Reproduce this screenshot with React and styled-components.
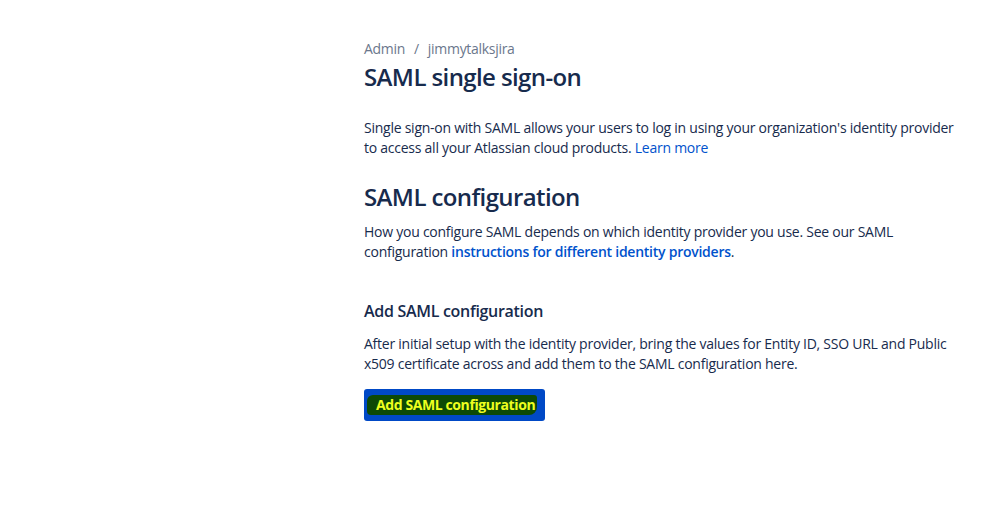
import React from "react";
import styled, { createGlobalStyle } from "styled-components";

const GlobalStyle = createGlobalStyle`
  html, body {
    margin: 0;
    padding: 0;
    background: #ffffff;
  }
  body {
    font-family: "Open Sans", "Noto Sans", "Liberation Sans", sans-serif;
    color: #172b4d;
    -webkit-font-smoothing: antialiased;
  }
`;

const Page = styled.div`
  padding: 39px 0 0 364px;
`;

const Content = styled.div`
  width: 594px;
  font-size: 14px;
  line-height: 20px;
  letter-spacing: -0.25px;
`;

const Breadcrumbs = styled.nav`
  display: flex;
  gap: 9px;
  color: #6b778c;
  height: 20px;
  letter-spacing: -0.3px;
`;

const Title = styled.h1`
  margin: ${({ top }) => top || 4}px 0 0;
  font-size: 24px;
  line-height: 28px;
  font-weight: 600;
  letter-spacing: -0.6px;
  color: #172b4d;
`;

const SubTitle = styled.h3`
  margin: 39px 0 0;
  font-size: 16px;
  line-height: 20px;
  font-weight: 600;
  letter-spacing: -0.3px;
  color: #172b4d;
`;

const Describe = styled.p`
  margin: ${({ top }) => top}px 0 0;
  color: #172b4d;
`;

const Link = styled.a`
  color: #0052cc;
  text-decoration: none;
  font-weight: ${({ bold }) => (bold ? 600 : 400)};
`;

const Button = styled.button`
  margin-top: 15px;
  height: 32px;
  padding: 0 8px 0 3px;
  border: none;
  border-radius: 3px;
  background: #0049c6;
  font-family: inherit;
  font-size: 14px;
  font-weight: 700;
  letter-spacing: -0.4px;
  cursor: pointer;
  display: flex;
  align-items: center;
`;

const Marker = styled.span`
  display: inline-block;
  padding: 0 2px 0 9px;
  line-height: 20px;
  background: #0d4a06;
  border-radius: 6px 3px 8px 4px;
  color: #eeff1f;
`;

const App = () => {
  return (
    <Page>
      <GlobalStyle />
      <Content>
        <Breadcrumbs>
          <span>Admin</span>
          <span>/</span>
          <span>jimmytalksjira</span>
        </Breadcrumbs>
        <Title>SAML single sign-on</Title>
        <Describe top={27}>
          Single sign-on with SAML allows your users to log in using your
          organization's identity provider to access all your Atlassian cloud
          products. <Link href="#">Learn more</Link>
        </Describe>
        <Title top={25}>SAML configuration</Title>
        <Describe top={11}>
          How you configure SAML depends on which identity provider you use.
          See our SAML configuration{" "}
          <Link href="#" bold>
            instructions for different identity providers
          </Link>
          .
        </Describe>
        <SubTitle>Add SAML configuration</SubTitle>
        <Describe top={13}>
          After initial setup with the identity provider, bring the values for
          Entity ID, SSO URL and Public x509 certificate across and add them to
          the SAML configuration here.
        </Describe>
        <Button>
          <Marker>Add SAML configuration</Marker>
        </Button>
      </Content>
    </Page>
  );
};

export default App;
